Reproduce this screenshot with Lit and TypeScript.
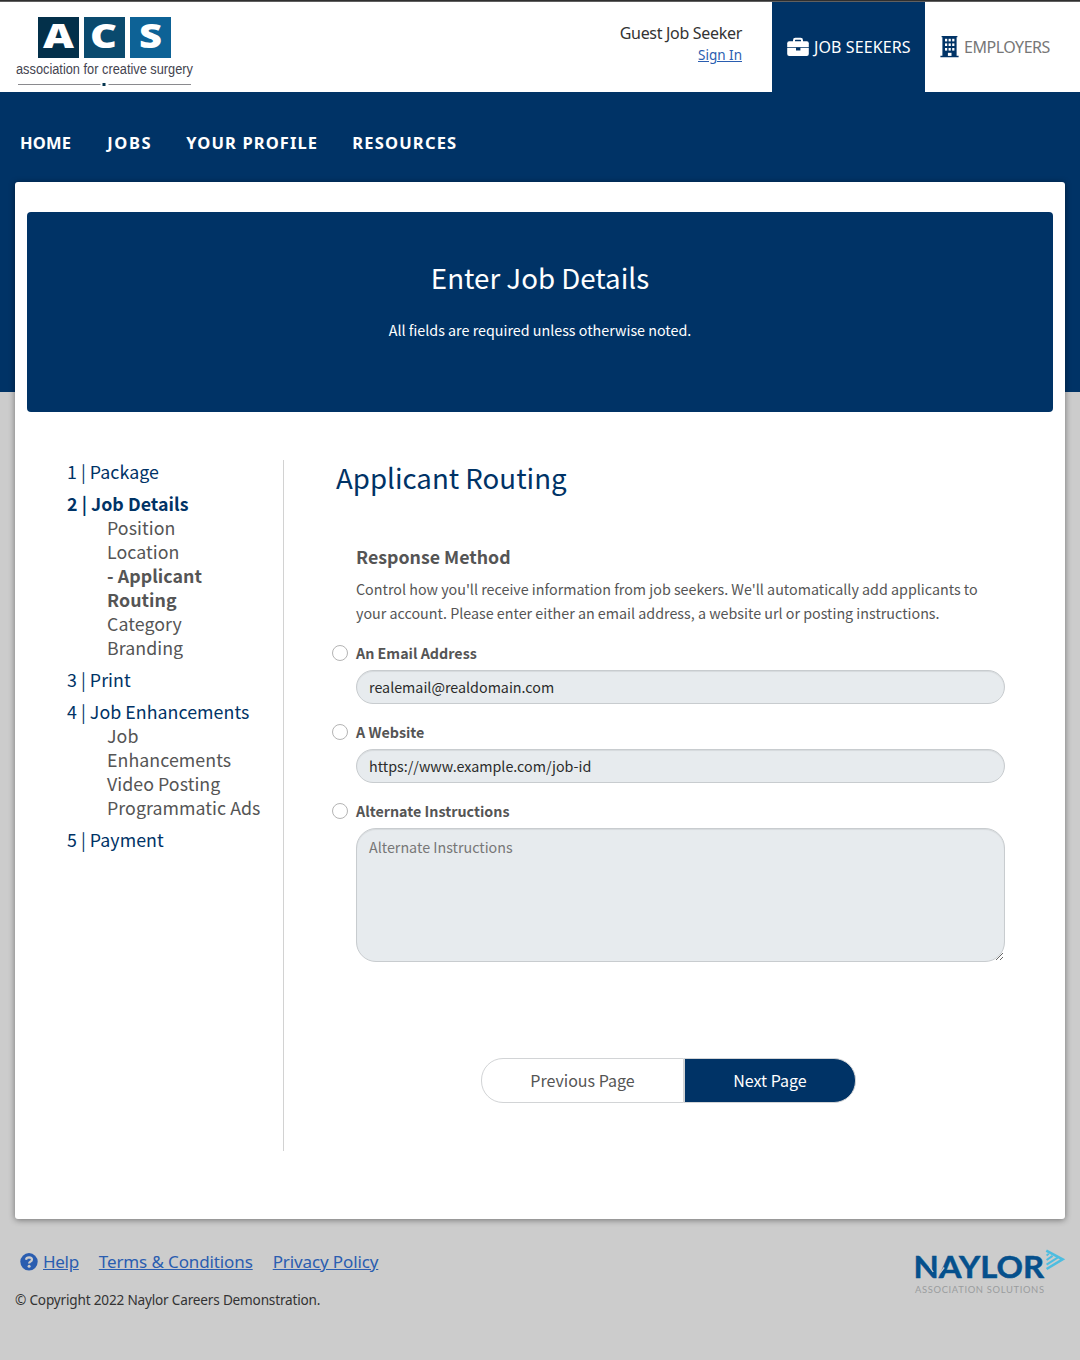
import { LitElement, html, css, svg } from "lit";
import { customElement } from "lit/decorators.js";
import { classMap } from "lit/directives/class-map.js";

interface Step {
  label: string;
  current?: boolean;
  items?: { label: string; current?: boolean }[];
}

const NAV = [
  { label: "HOME", cls: "home" },
  { label: "JOBS", cls: "jobs" },
  { label: "YOUR PROFILE", cls: "profile" },
  { label: "RESOURCES", cls: "resources" },
];

const STEPS: Step[] = [
  { label: "1 | Package" },
  {
    label: "2 | Job Details",
    current: true,
    items: [
      { label: "Position" },
      { label: "Location" },
      { label: "- Applicant Routing", current: true },
      { label: "Category" },
      { label: "Branding" },
    ],
  },
  { label: "3 | Print" },
  {
    label: "4 | Job Enhancements",
    items: [
      { label: "Job Enhancements" },
      { label: "Video Posting" },
      { label: "Programmatic Ads" },
    ],
  },
  { label: "5 | Payment" },
];

const ACS_TILES = [
  { letter: "A", x: 22, tx: 27, w: 31, fill: "#03304a" },
  { letter: "C", x: 68, tx: 74, w: 27, fill: "#0a4a6e" },
  { letter: "S", x: 114, tx: 123, w: 23, fill: "#0d6296" },
];

@customElement("site-header")
class SiteHeader extends LitElement {
  static styles = css`
    :host { display: block; }
    .bar {
      box-sizing: border-box;
      height: 92px;
      border-top: 1px solid #2f2f2f;
      box-shadow: inset 0 1px 0 #606060;
      background: #fff;
      display: flex;
      align-items: stretch;
      font-family: "Noto Sans", "Open Sans", sans-serif;
      font-size: 16px;
    }
    .logo { margin: 13px 0 0 10px; display: block; overflow: visible; }
    .user {
      margin-left: auto;
      padding: 20px 30px 0 0;
      text-align: right;
      color: #333;
      line-height: 24px;
      letter-spacing: -0.31px;
    }
    .signin {
      display: block;
      font-size: 13.5px;
      line-height: 20px;
      letter-spacing: 0;
      color: #2a5db0;
      text-decoration: underline;
    }
    .tab {
      box-sizing: border-box;
      margin-top: 1px;
      display: flex;
      align-items: center;
      gap: 4px;
      padding: 0 0 0 15px;
      white-space: nowrap;
    }
    .tab.seekers { width: 153px; gap: 5px; background: #003366; color: #fff; letter-spacing: 0.1px; }
    .tab.employers { width: 155px; color: #777; letter-spacing: -0.48px; }
    .nav {
      display: flex;
      height: 90px;
      padding-left: 20px;
      gap: 34px;
      font: 700 16.5px/24px "Noto Sans", "Open Sans", sans-serif;
      color: #fff;
    }
    .nav a { margin-top: 39px; white-space: nowrap; }
    .nav .home { letter-spacing: 0.2px; margin-right: 2px; }
    .jobs { letter-spacing: 1.6px; }
    .profile { letter-spacing: 1.1px; }
    .resources { letter-spacing: 1.2px; }
  `;

  render() {
    return html`
      <div class="bar">
        <svg class="logo" width="190" height="78" viewBox="-6 0 190 78">
          ${ACS_TILES.map(
            (t) => svg`
              <rect x=${t.x} y="3" width="41" height="41" fill=${t.fill}></rect>
              <text x=${t.tx} y="34.3" font-family="Open Sans, sans-serif" font-weight="800" font-size="33"
                textLength=${t.w} lengthAdjust="spacingAndGlyphs" fill="#fff">${t.letter}</text>`
          )}
          <text x="0" y="59.7" font-family="Liberation Sans, Arial, sans-serif" font-size="15.5"
            textLength="177" lengthAdjust="spacingAndGlyphs" fill="#44444f">association for creative surgery</text>
          <path d="M2 70.5H84.5M92.5 70.5H175" stroke="#8a8a8e"></path>
          <rect x="86.5" y="69" width="3" height="3" fill="#063650"></rect>
        </svg>
        <div class="user">
          Guest Job Seeker
          <a class="signin">Sign In</a>
        </div>
        <div class="tab seekers">
          <svg width="22" height="20" viewBox="0 0 22 20">
            <path d="M7 5V3.2Q7 1.8 8.4 1.8H13.6Q15 1.8 15 3.2V5" fill="none" stroke="#fff" stroke-width="2"></path>
            <rect x="0.2" y="4.2" width="21.6" height="14.8" rx="2" fill="#fff"></rect>
            <path d="M0 10.5H22" stroke="#003366" stroke-opacity="0.75" stroke-width="1"></path>
            <rect x="9" y="10.5" width="4.4" height="3" fill="#003366"></rect>
          </svg>
          <span>JOB SEEKERS</span>
        </div>
        <div class="tab employers">
          <svg width="20" height="22" viewBox="0 0.8 20 22">
            <path d="M1.6 0.8H17.4V2H16.6V20.6H18.6V22H0.4V20.6H2.4V2H1.6Z" fill="#003366"></path>
            ${[3.6, 8.2, 12.8].map((y) =>
              [5, 8.6, 12.2].map((x) => svg`<rect x=${x} y=${y} width="2.2" height="2.6" fill="#fff"></rect>`)
            )}
            <path d="M7.9 20.7V17.6H11.5V20.7Z" fill="#fff"></path>
          </svg>
          <span>EMPLOYERS</span>
        </div>
      </div>
      <nav class="nav">${NAV.map((n) => html`<a class=${n.cls}>${n.label}</a>`)}</nav>
    `;
  }
}

@customElement("step-list")
class StepList extends LitElement {
  static styles = css`
    :host { display: block; }
    .list {
      display: flow-root;
      box-sizing: border-box;
      width: 217px;
      height: 691px;
      padding-right: 20px;
      border-right: 1px solid #d2d2d2;
      font: 400 17.8px/24px "Noto Sans CJK SC", sans-serif;
      letter-spacing: 0.05px;
      color: #003366;
    }
    .steps {
      display: flex;
      flex-direction: column;
      gap: 8px;
      margin-top: -1px;
    }
    .sub { padding-left: 40px; color: #555; }
    .current { font-weight: 700; }
  `;

  render() {
    return html`<div class="list"><div class="steps">
      ${STEPS.map(
        (s) => html`<div>
          <div class=${classMap({ current: !!s.current })}>${s.label}</div>
          ${(s.items ?? []).map(
            (i) => html`<div class=${classMap({ sub: true, current: !!i.current })}>${i.label}</div>`
          )}
        </div>`
      )}
    </div></div>`;
  }
}

@customElement("routing-form")
class RoutingForm extends LitElement {
  static styles = css`
    :host { display: block; flex: 1; font-family: "Noto Sans CJK SC", sans-serif; color: #555; }
    .title { margin: 0; font-size: 27.65px; line-height: 34px; font-weight: 400; color: #003366; }
    .fields { padding: 50px 60px 0 20px; }
    .heading { margin: 0; font-size: 17.75px; line-height: 24px; font-weight: 700; }
    .help { margin: 9px 0 16px; width: 640px; font-size: 14.31px; line-height: 24px; }
    .option { display: flex; align-items: center; gap: 8px; margin-left: -24px; height: 24px; }
    .radio {
      appearance: none;
      box-sizing: border-box;
      width: 16px;
      height: 16px;
      margin: 0;
      border: 1px solid #b4b4b4;
      border-radius: 50%;
      background: #fff;
    }
    .label { font-size: 14.3px; line-height: 24px; font-weight: 700; }
    .input {
      display: block;
      box-sizing: border-box;
      width: 649px;
      height: 34px;
      margin: 5px 0 16px;
      padding: 0 12px 2px;
      border: 1px solid #c8cccf;
      border-radius: 17px;
      background: #e7ebee;
      box-shadow: inset 0 1px 1px rgba(0, 0, 0, 0.075);
      font: 400 14.3px/20px "Noto Sans CJK SC", sans-serif;
      color: #2b2b2b;
      outline: none;
    }
    .area { height: 134px; padding: 6px 12px; border-radius: 20px; line-height: 24px; resize: vertical; margin-bottom: 0; }
    .area::placeholder { color: #777; opacity: 1; }
    .actions { display: flex; margin: 96px 0 0 145px; font-size: 16px; line-height: 43px; text-align: center; }
    .btn { box-sizing: border-box; height: 45px; border: 1px solid #d2d4d6; }
    .prev { width: 203px; border-radius: 22px 0 0 22px; }
    .next { width: 172px; border-radius: 0 22px 22px 0; background: #003366; color: #fff; }
  `;

  render() {
    return html`
      <h2 class="title">Applicant Routing</h2>
      <div class="fields">
        <h3 class="heading">Response Method</h3>
        <p class="help">
          Control how you'll receive information from job seekers. We'll automatically add applicants to your
          account. Please enter either an email address, a website url or posting instructions.
        </p>
        <div class="option"><input class="radio" type="radio" name="m" /><span class="label">An Email Address</span></div>
        <input class="input" .value=${"realemail@realdomain.com"} />
        <div class="option"><input class="radio" type="radio" name="m" /><span class="label">A Website</span></div>
        <input class="input" .value=${"https://www.example.com/job-id"} />
        <div class="option"><input class="radio" type="radio" name="m" /><span class="label">Alternate Instructions</span></div>
        <textarea class="input area" placeholder="Alternate Instructions"></textarea>
      </div>
      <div class="actions">
        <div class="btn prev">Previous Page</div>
        <div class="btn next">Next Page</div>
      </div>
    `;
  }
}

@customElement("site-footer")
class SiteFooter extends LitElement {
  static styles = css`
    :host { display: block; }
    .footer {
      display: flex;
      justify-content: space-between;
      padding: 30px 12px 0 15px;
      font-family: "Noto Sans", "Open Sans", sans-serif;
    }
    .links {
      display: flex;
      align-items: center;
      gap: 20px;
      margin-top: 1px;
      padding-left: 5px;
      font-size: 17px;
      line-height: 24px;
      letter-spacing: -0.12px;
      color: #2a5db0;
    }
    .link { text-decoration: underline; white-space: nowrap; }
    .help { display: flex; align-items: center; gap: 5px; letter-spacing: -0.3px; }
    .copy { margin-top: 14px; font-size: 13.6px; line-height: 24px; letter-spacing: -0.19px; color: #333; }
    .naylor { display: block; overflow: visible; }
  `;

  render() {
    return html`<div class="footer">
      <div>
        <div class="links">
          <div class="help">
            <svg width="18" height="18" viewBox="0 0 18 18">
              <circle cx="9" cy="8.8" r="8.7" fill="#2a5db0"></circle>
              <path d="M6 6.7Q6.4 4.3 9.1 4.3Q12 4.4 12 6.7Q11.9 8.1 10.3 8.8Q9.1 9.4 9.1 10.5" fill="none" stroke="#ccc" stroke-width="2.2"></path>
              <circle cx="9.1" cy="13.2" r="1.5" fill="#ccc"></circle>
            </svg>
            <a class="link">Help</a>
          </div>
          <a class="link">Terms &amp; Conditions</a>
          <a class="link">Privacy Policy</a>
        </div>
        <div class="copy">© Copyright 2022 Naylor Careers Demonstration.</div>
      </div>
      <svg class="naylor" width="160" height="50" viewBox="-6 0 160 50">
        <text x="-0.5" y="29" font-family="Lato, sans-serif" font-weight="700" font-size="31"
          textLength="130.5" lengthAdjust="spacingAndGlyphs" fill="#05508c" stroke="#05508c" stroke-width="0.5">NAYLOR</text>
        <path d="M15.4 17.5L19.2 23M26 24.2L30.2 18.5" stroke="#ccc" stroke-width="1.3"></path>
        <text x="1" y="43.6" font-family="Lato, sans-serif" font-size="9.4"
          textLength="129" lengthAdjust="spacing" fill="#9a9c9e">ASSOCIATION SOLUTIONS</text>
        <g fill="none" stroke="#4dbde0" stroke-width="2.6">
          <path d="M132.3 1.6L148.6 10.4L132.6 20"></path>
          <path d="M132.6 15.6L143.6 8.6M132.6 11L138.6 6.8" stroke-width="2.1"></path>
          <path d="M132.6 6.4L134.8 4.8" stroke-width="1.8"></path>
        </g>
      </svg>
    </div>`;
  }
}

@customElement("app-root")
class AppRoot extends LitElement {
  static styles = css`
    :host { display: block; }
    .page {
      box-sizing: border-box;
      width: 1080px;
      height: 1360px;
      overflow: hidden;
      background: linear-gradient(#003366 392px, #ccc 392px);
    }
    .card {
      box-sizing: border-box;
      height: 1037px;
      margin: 0 15px;
      padding: 30px 12px 0;
      border-radius: 3px;
      background: #fff;
      box-shadow: 0 1px 6px rgba(0, 0, 0, 0.45);
    }
    .hero {
      box-sizing: border-box;
      height: 200px;
      padding-top: 47px;
      border-radius: 4px;
      background: #003366;
      color: #fff;
      text-align: center;
      font-family: "Noto Sans CJK SC", sans-serif;
    }
    .hero-title { margin: 0; font-size: 27.7px; line-height: 36px; font-weight: 400; }
    .hero-note { margin: 23px 0 0; font-size: 14.3px; line-height: 24px; }
    .columns { display: flex; gap: 52px; padding: 48px 0 0 40px; }
  `;

  render() {
    return html`<div class="page">
      <site-header></site-header>
      <main class="card">
        <div class="hero">
          <h1 class="hero-title">Enter Job Details</h1>
          <p class="hero-note">All fields are required unless otherwise noted.</p>
        </div>
        <div class="columns">
          <step-list></step-list>
          <routing-form></routing-form>
        </div>
      </main>
      <site-footer></site-footer>
    </div>`;
  }
}
